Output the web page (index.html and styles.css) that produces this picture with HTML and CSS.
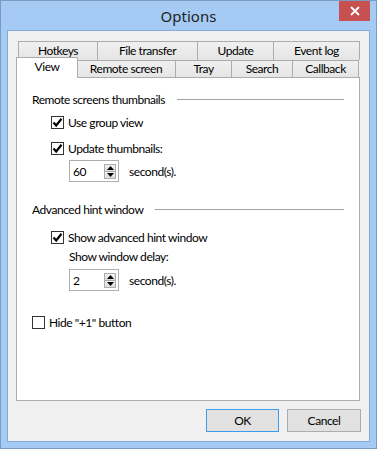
FILE: index.html
```html
<!doctype html>
<html lang="en">
    <head>
        <title>Options</title>
        <meta charset="utf-8" />
        <link rel="stylesheet" href="styles.css">
    </head>
    <body>
        <div class="window">
            <div class="titlebar">
                <span></span>
                <span class="title">Options</span>
                <span class="close-cell">
                    <span class="close">
                        <svg width="10" height="10" viewBox="0 0 10 10"><path d="M1 1L9 9M9 1L1 9" stroke="#fff" stroke-width="1.8"/></svg>
                    </span>
                </span>
            </div>
            <div class="client">
                <div class="tabs">
                    <div class="tab-row back">
                        <div class="tab w-hotkeys">Hotkeys</div>
                        <div class="tab w-transfer">File transfer</div>
                        <div class="tab w-update">Update</div>
                        <div class="tab w-eventlog">Event log</div>
                    </div>
                    <div class="tab-row front">
                        <div class="tab selected w-view">View</div>
                        <div class="tab w-remote">Remote screen</div>
                        <div class="tab w-tray">Tray</div>
                        <div class="tab w-search">Search</div>
                        <div class="tab w-callback">Callback</div>
                    </div>
                </div>
                <div class="panel">
                    <div class="group-title g1">Remote screens thumbnails<span class="rule"></span></div>
                    <div class="indent">
                        <label class="check r-use"><span class="box checked"><svg width="11" height="11" viewBox="0 0 11 11"><path d="M1.5 5.5L4.2 8.5L9.5 1.8" fill="none" stroke="#000" stroke-width="2.2"/></svg></span>Use group view</label>
                        <label class="check r-update"><span class="box checked"><svg width="11" height="11" viewBox="0 0 11 11"><path d="M1.5 5.5L4.2 8.5L9.5 1.8" fill="none" stroke="#000" stroke-width="2.2"/></svg></span>Update thumbnails:</label>
                        <div class="nested spin-row r-spin1">
                            <div class="spin">
                                <span class="spin-value">60</span>
                                <span class="spin-btns">
                                    <span class="spin-btn"><svg width="7" height="4" viewBox="0 0 7 4"><path d="M0 4L3.5 0L7 4Z" fill="#000"/></svg></span>
                                    <span class="spin-btn"><svg width="7" height="4" viewBox="0 0 7 4"><path d="M0 0L7 0L3.5 4Z" fill="#000"/></svg></span>
                                </span>
                            </div>
                            <span class="unit">second(s).</span>
                        </div>
                    </div>

                    <div class="group-title g2">Advanced hint window<span class="rule"></span></div>
                    <div class="indent">
                        <label class="check r-hint"><span class="box checked"><svg width="11" height="11" viewBox="0 0 11 11"><path d="M1.5 5.5L4.2 8.5L9.5 1.8" fill="none" stroke="#000" stroke-width="2.2"/></svg></span>Show advanced hint window</label>
                        <div class="nested text-row r-delay">Show window delay:</div>
                        <div class="nested spin-row r-spin2">
                            <div class="spin">
                                <span class="spin-value">2</span>
                                <span class="spin-btns">
                                    <span class="spin-btn"><svg width="7" height="4" viewBox="0 0 7 4"><path d="M0 4L3.5 0L7 4Z" fill="#000"/></svg></span>
                                    <span class="spin-btn"><svg width="7" height="4" viewBox="0 0 7 4"><path d="M0 0L7 0L3.5 4Z" fill="#000"/></svg></span>
                                </span>
                            </div>
                            <span class="unit">second(s).</span>
                        </div>
                    </div>

                    <label class="check r-hide"><span class="box"></span>Hide "+1" button</label>
                </div>
                <div class="buttons">
                    <button type="button" class="btn default">OK</button>
                    <button type="button" class="btn">Cancel</button>
                </div>
            </div>
        </div>
    </body>
</html>
```

FILE: styles.css
```css
body {
    margin: 0;
    font-family: Lato, "Noto Sans", sans-serif;
    font-size: 12px;
    letter-spacing: -0.45px;
    color: #000;
}
.window {
    box-sizing: border-box;
    width: 377px;
    height: 449px;
    background-color: #a5cbf4;
    border: 1px solid #7a9cc2;
    padding: 0 6px 6px 6px;
    display: flex;
    flex-direction: column;
}
.titlebar {
    height: 29px;
    display: grid;
    grid-template-columns: 1fr auto 1fr;
}
.title {
    font-family: "Noto Sans", sans-serif;
    font-size: 15px;
    letter-spacing: 0;
    line-height: 20px;
    padding-top: 5px;
    color: #232323;
}
.close-cell {
    display: flex;
    justify-content: flex-end;
    align-items: flex-start;
}
.close {
    width: 31px;
    height: 20px;
    background-color: #c75050;
    display: flex;
    align-items: center;
    justify-content: center;
}
.client {
    flex: 1;
    background-color: #f0f0f0;
    border: 1px solid #86aad3;
    display: flex;
    flex-direction: column;
}

/* tabs */
.tabs {
    padding: 10px 0 0 8px;
}
.tab-row {
    display: flex;
}
.tab-row.back {
    padding-left: 2px;
    height: 19px;
}
.tab-row.front {
    height: 17px;
}
.tab {
    box-sizing: border-box;
    background: linear-gradient(#f0f0f0, #e5e5e5);
    border: 1px solid #acacac;
    border-bottom: 0;
    border-left: 0;
    text-align: center;
}
.tab:first-child {
    border-left: 1px solid #acacac;
}
.back .tab {
    height: 19px;
    line-height: 17px;
}
.front .tab {
    height: 17px;
    line-height: 15px;
}
.front .tab.selected {
    position: relative;
    z-index: 1;
    background: #fff;
    height: 21px;
    margin-top: -3px;
    line-height: 17px;
    border-right: 1px solid #acacac;
    margin-right: -1px;
}
.w-hotkeys { width: 80px; }
.w-transfer { width: 100px; }
.w-update { width: 76px; }
.w-eventlog { width: 86px; }
.w-view { width: 62px; }
.w-remote { width: 99px; }
.w-tray { width: 56px; }
.w-search { width: 61px; }
.w-callback { width: 66px; }

/* panel */
.panel {
    box-sizing: border-box;
    margin-left: 8px;
    width: 344px;
    height: 324px;
    background-color: #fff;
    border: 1px solid #acacac;
    padding: 0 15px 0 15px;
}
.group-title {
    display: flex;
    align-items: center;
    line-height: 15px;
    white-space: nowrap;
}
.group-title .rule {
    flex: 1;
    height: 1px;
    background-color: #a0a0a0;
    margin-left: 12px;
}
.g1 { margin-top: 14px; }
.g2 { margin-top: 20px; }
.indent {
    padding-left: 19px;
}
.nested {
    padding-left: 18px;
}
.check {
    display: flex;
    align-items: center;
    line-height: 15px;
    white-space: nowrap;
}
.box {
    box-sizing: border-box;
    width: 13px;
    height: 13px;
    border: 1px solid #333;
    background-color: #fff;
    margin-right: 4px;
    display: flex;
    align-items: center;
    justify-content: center;
}
.text-row {
    line-height: 15px;
}
.spin-row {
    display: flex;
    align-items: center;
}
.spin {
    box-sizing: border-box;
    width: 50px;
    height: 22px;
    border: 1px solid #abadb3;
    display: flex;
    align-items: center;
    justify-content: space-between;
    padding: 0 2px 0 3px;
    background-color: #fff;
}
.spin-btns {
    display: flex;
    flex-direction: column;
    border: 1px solid #acacac;
}
.spin-btn {
    width: 10px;
    height: 6px;
    background: linear-gradient(#f2f2f2, #dcdcdc);
    display: flex;
    align-items: center;
    justify-content: center;
}
.spin-btn + .spin-btn {
    border-top: 1px solid #acacac;
}
.unit {
    margin-left: 10px;
}
.r-use { margin-top: 8px; }
.r-update { margin-top: 11px; }
.r-spin1 { margin-top: 4px; }
.r-hint { margin-top: 13px; }
.r-delay { margin-top: 4px; }
.r-spin2 { margin-top: 5px; }
.r-hide { margin-top: 24px; }

/* buttons */
.buttons {
    display: flex;
    justify-content: flex-end;
    gap: 8px;
    margin: 8px 8px 0 0;
}
.btn {
    box-sizing: border-box;
    width: 73px;
    height: 23px;
    font-family: inherit;
    font-size: 12px;
    letter-spacing: inherit;
    background: #e1e1e1;
    border: 1px solid #adadad;
    padding: 0;
    color: #000;
}
.btn + .btn {
    width: 74px;
}
.btn.default {
    border-color: #3c9cf0;
}
```
